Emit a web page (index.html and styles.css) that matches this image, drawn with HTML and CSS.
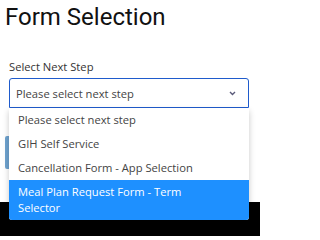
FILE: index.html
```html
<!DOCTYPE html>
<html lang="en">
<head>
<meta charset="utf-8">
<title>Form Selection</title>
<link rel="stylesheet" href="styles.css">
</head>
<body>
<main class="page">
  <h1 class="title">Form Selection</h1>
  <div class="field">
    <label class="label">Select Next Step</label>
    <div class="select-wrap">
      <div class="select">
        <span class="select-text">Please select next step</span>
        <svg class="chevron" width="7" height="5" viewBox="0 0 7 5"><polyline points="1,1 3.5,3.5 6,1" fill="none" stroke="#5b5b7a" stroke-width="1.4"/></svg>
      </div>
      <ul class="dropdown">
        <li class="option">Please select next step</li>
        <li class="option">GIH Self Service</li>
        <li class="option">Cancellation Form - App Selection</li>
        <li class="option option-active">Meal Plan Request Form - Term Selector</li>
      </ul>
    </div>
  </div>
  <div class="actions">
    <button class="btn" aria-label="Continue"></button>
  </div>
</main>
<footer class="footer"></footer>
</body>
</html>
```
FILE: styles.css
```css
html, body {
  margin: 0;
  padding: 0;
  background: #fff;
}
body {
  font-family: "Open Sans", "Noto Sans", sans-serif;
  width: 260px;
  height: 236px;
  overflow: hidden;
}
.page {
  padding: 0 5px;
}
.title {
  font-family: Roboto, "Liberation Sans", sans-serif;
  font-weight: 400;
  font-size: 24px;
  line-height: 28px;
  color: #111;
  margin: 3px 0 0 0;
}
.field {
  margin: 28px 0 0 4px;
  width: 240px;
}
.label {
  display: block;
  font-size: 11.2px;
  line-height: 16px;
  color: #333;
  margin-bottom: 3px;
}
.select-wrap {
  position: relative;
}
.select {
  box-sizing: border-box;
  height: 30px;
  border: 1px solid #1f5bcc;
  border-radius: 3px 3px 0 0;
  display: flex;
  align-items: center;
  justify-content: space-between;
  padding: 0 12px 0 6px;
  font-size: 11.2px;
  color: #444;
}
.chevron {
  display: block;
}
.dropdown {
  position: absolute;
  top: 30px;
  left: 0;
  width: 240px;
  box-sizing: border-box;
  margin: 0;
  padding: 0;
  list-style: none;
  background: #fff;
  border-radius: 0 0 3px 3px;
  box-shadow: 0 3px 6px rgba(0,0,0,0.22);
  overflow: hidden;
  z-index: 2;
}
.option {
  font-size: 11.2px;
  line-height: 16px;
  padding: 4px 24px 4px 9px;
  color: #444;
}
.option-active {
  background: #1e90ff;
  color: #fff;
}
.actions {
  margin-top: 28px;
}
.btn {
  display: block;
  width: 120px;
  height: 33px;
  border: 0;
  border-radius: 2px;
  background: #6fa3cf;
}
.footer {
  margin-top: 33px;
  height: 40px;
  background: #000;
}
```
